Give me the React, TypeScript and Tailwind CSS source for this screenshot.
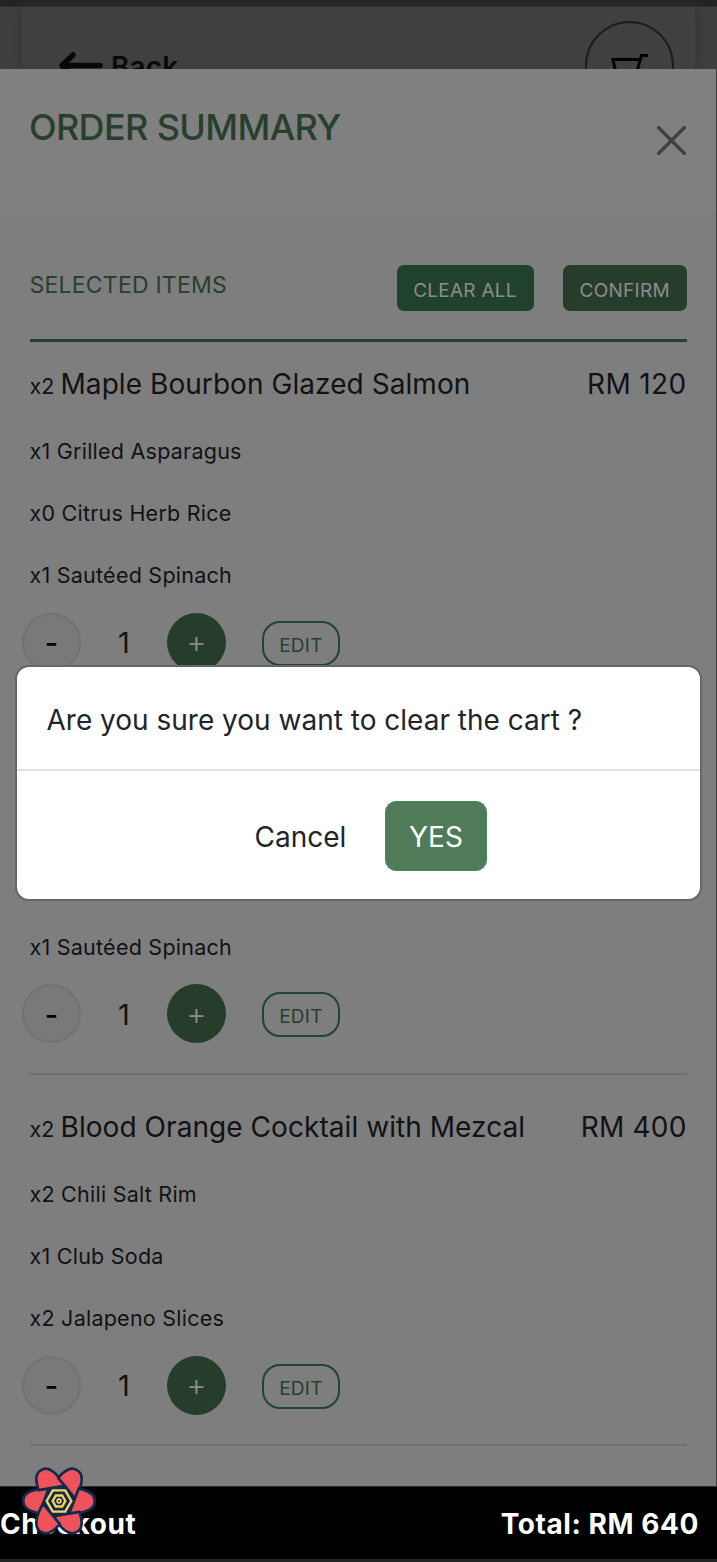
import React from "react";

function Label({ children, className }: { children: React.ReactNode; className: string }) {
  return <span className={"whitespace-nowrap " + className}>{children}</span>;
}

type Item = { name: string; price: string; priceClass: string; extras: string[] };

const salmon: Item = {
  name: "Maple Bourbon Glazed Salmon",
  price: "RM 120",
  priceClass: "tracking-[0.35px]",
  extras: ["x1 Grilled Asparagus", "x0 Citrus Herb Rice", "x1 Sautéed Spinach"],
};

const items: Item[] = [
  salmon,
  salmon,
  {
    name: "Blood Orange Cocktail with Mezcal",
    price: "RM 400",
    priceClass: "tracking-[0.2px]",
    extras: ["x2 Chili Salt Rim", "x1 Club Soda", "x2 Jalapeno Slices"],
  },
];

const petalTurns = [0, 60, 120, 180, 240, 300];

function OrderItem({ item }: { item: Item }) {
  return (
    <section className="flex h-[371.5px] shrink-0 flex-col text-[#111214]">
      <div className="flex h-[77.5px] items-baseline justify-between pt-[22px] text-[28px] leading-[40px]">
        <div className="flex items-baseline">
          <Label className="w-[31px] text-[21.5px]">x2</Label>
          <Label className="tracking-[0.06px]">{item.name}</Label>
        </div>
        <Label className={item.priceClass}>{item.price}</Label>
      </div>
      {item.extras.map((extra) => (
        <div key={extra} className="flex h-[62.3px] items-center text-[21.5px]">
          <Label className="tracking-[0.24px]">{extra}</Label>
        </div>
      ))}
      <div className="-ml-[7.5px] flex h-[72px] items-center">
        <button className="flex h-[59px] w-[59px] items-center justify-center rounded-full border-2 border-[#727272] bg-[#797979] pt-px text-[29px] font-medium text-black">-</button>
        <span className="w-[86px] pt-px text-center text-[29px]">1</span>
        <button className="flex h-[59px] w-[59px] items-center justify-center rounded-full bg-[#273d2c] text-[#8a8d8a]">
          <span className="text-[31px] leading-[30px] font-light">+</span>
        </button>
        <button className="mt-0.5 ml-9 flex h-[45px] w-[78px] items-center justify-center rounded-[18px] border-2 border-[#21452e] pt-[5px] text-[19px] tracking-[0.3px] text-[#27402d]">EDIT</button>
      </div>
      <div className="mt-[23px] h-[2px] bg-[#707070]" />
    </section>
  );
}

export default function App() {
  return (
    <div className="relative flex h-[1562px] w-[717px] flex-col overflow-hidden bg-[#3f3f3f] font-['Inter',sans-serif]">
      <div className="h-[7px] shrink-0 border-b border-[#2e2e33] bg-[#242426]" />
      <header className="mx-[22px] flex h-[62px] shrink-0 justify-between overflow-hidden bg-[#404040] pr-[21px] pl-[37px] shadow-[0_0_12px_#333]">
        <div className="flex pt-[43px]">
          <svg className="mt-0.5 h-[28px] w-[45px]" viewBox="0 0 45 28" fill="none" stroke="#080808" strokeWidth="5.6" strokeLinecap="round" strokeLinejoin="round">
            <path d="M14 3L3 13.5L14 24M3 13.5H41" />
          </svg>
          <span className="ml-[7px] text-[28px] leading-[34px] font-semibold tracking-[0.1px] text-[#090909]">Back</span>
        </div>
        <div className="mt-[14px] flex h-[89px] w-[89px] shrink-0 justify-center rounded-full border-2 border-[#1c1c1c]">
          <svg className="mt-[30px] h-[34px] w-[38px]" viewBox="0 0 38 34" fill="none" stroke="#000" strokeWidth="3">
            <path d="M37 2.5H30.5L24 25H6L2 6.5H29.5" />
          </svg>
        </div>
      </header>

      <main className="mr-px flex h-[1417px] shrink-0 flex-col overflow-hidden bg-[#7e7e7e]">
        <div className="flex h-[142px] shrink-0 justify-between bg-[#808080] pr-[30px] pl-[29px]">
          <h1 className="mt-[34.5px] text-[36px] leading-[46px] font-medium tracking-[-0.65px] whitespace-nowrap text-[#273f2c]">ORDER SUMMARY</h1>
          <svg className="mt-[57px] h-[29px] w-[29px]" viewBox="0 0 29 29" stroke="#404040" strokeWidth="3.4" strokeLinecap="round">
            <path d="M1.5 1.5L27.5 27.5M27.5 1.5L1.5 27.5" />
          </svg>
        </div>
        <div className="mx-[29.5px] mt-[54px] flex h-[46px] shrink-0 items-center text-[19px] tracking-[0.27px]">
          <h2 className="mb-[6px] flex-1 text-[23px] tracking-[0.22px] whitespace-nowrap text-[#27402d]">SELECTED ITEMS</h2>
          <button className="flex h-[46px] w-[137px] items-center justify-center rounded-[7px] bg-[#20422c] pt-[6px] whitespace-nowrap text-[#8a8d8a]">CLEAR ALL</button>
          <button className="ml-[29.5px] flex h-[46px] w-[123.5px] items-center justify-center rounded-[7px] bg-[#273d2c] pt-[6px] text-[#8a8d8a]">CONFIRM</button>
        </div>
        <div className="mx-[29.5px] mt-[27.5px] h-[3.5px] shrink-0 bg-[#273f2c]" />
        <div className="mx-[29.5px] flex flex-col">
          {items.map((item, i) => (
            <OrderItem key={i} item={item} />
          ))}
        </div>
      </main>

      <footer className="flex h-[73px] shrink-0 items-center justify-between border-t border-[#2c2c2c] bg-black pt-px pr-[18px] text-[28px] font-bold tracking-[0.56px] text-white">
        <Label className="">Checkout</Label>
        <Label className="">Total: RM 640</Label>
      </footer>
      <div className="h-[3px] shrink-0 bg-[#242223]" />

      <div role="dialog" className="absolute top-[665px] left-[15px] flex h-[236px] w-[687px] flex-col rounded-[14px] border-2 border-[#666] bg-white text-[28px] text-[#212529]">
        <div className="flex h-[104px] items-center border-b-2 border-[#dee2e6] pt-[3px] pl-[29.5px]">
          <Label className="">Are you sure you want to clear the cart ?</Label>
        </div>
        <div className="flex flex-1 items-center pt-0.5 pl-[237.5px]">
          <Label className="w-[130.5px] pt-px">Cancel</Label>
          <button className="flex h-[70px] w-[102px] items-center justify-center rounded-[11px] border border-[#458c5c] bg-[#4f7b58] pt-px text-white">YES</button>
        </div>
      </div>

      <svg className="absolute top-[1467px] left-[22px] h-[68px] w-[74px]" viewBox="66 111 222 204" fill="none">
        <g fill="#f0525c" stroke="#0f2c4f" strokeWidth="8" strokeLinejoin="round">
          {petalTurns.map((turn) => (
            <path key={turn} transform={`rotate(${turn} 177 213)`} d="M70 213C68 186 106 175 146 176L118 250C88 244 69 232 70 213Z" />
          ))}
        </g>
        <path d="M130 213L153 172H201L224 213L201 254H153Z" fill="#0f2c4f" />
        <g stroke="#fbd45c" strokeWidth="7">
          <path d="M140 213L158.500 181H195.500L214 213L195.500 245H158.500Z" />
          <path d="M158 213L167.500 196.500H186.500L196 213L186.500 229.500H167.500Z" />
        </g>
        <circle cx="177" cy="213" r="5.5" stroke="#fbd45c" strokeWidth="5" />
      </svg>
    </div>
  );
}
